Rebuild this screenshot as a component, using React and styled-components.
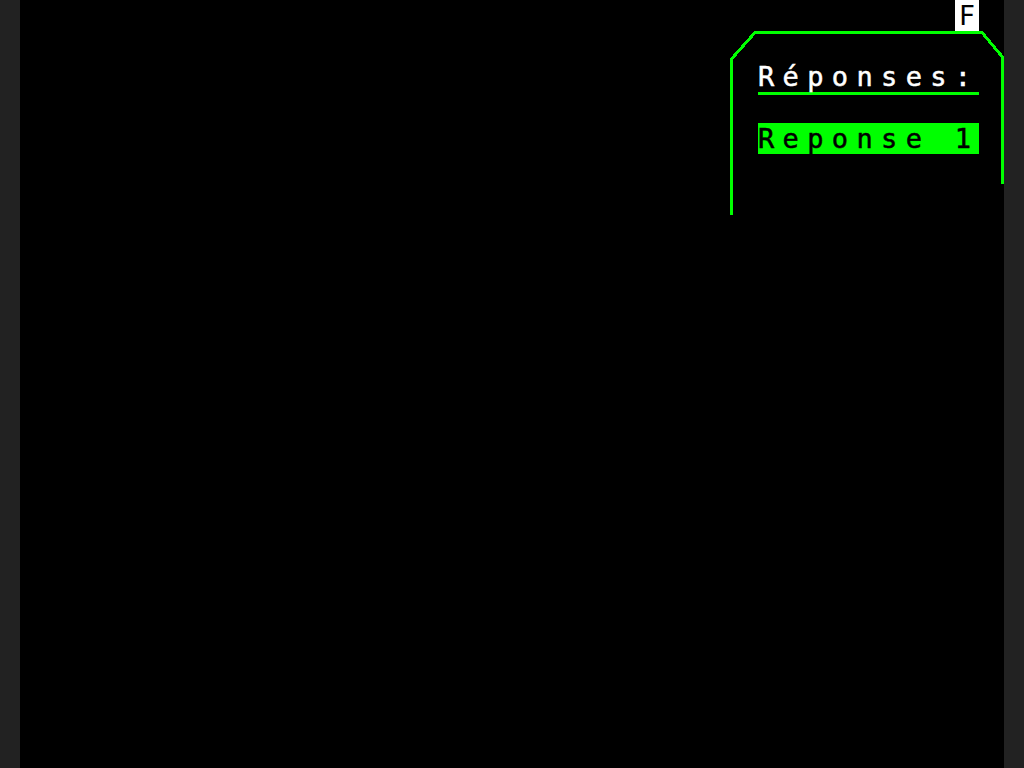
import React from 'react';
import styled, { createGlobalStyle } from 'styled-components';

const GREEN = '#00ff00';

const GlobalStyle = createGlobalStyle`
  html, body {
    margin: 0;
    padding: 0;
    background: #222222;
  }
  body {
    font-family: "DejaVu Sans Mono", "Liberation Mono", monospace;
  }
`;

const Screen = styled.div`
  width: 984px;
  height: 768px;
  margin: 0 auto;
  background: #000;
  display: flex;
  flex-direction: column;
  overflow: hidden;
`;

const StatusRow = styled.div`
  height: 31px;
  display: flex;
  justify-content: flex-end;
  padding-right: 25px;
`;

const StatusFlag = styled.div`
  width: 24px;
  height: 31px;
  background: #fff;
  color: #000;
  font-size: 27px;
  line-height: 31px;
  text-align: center;
`;

const PanelRow = styled.div`
  display: flex;
  justify-content: flex-end;
`;

const Panel = styled.div`
  position: relative;
  width: 274px;
  height: 184px;
  box-sizing: border-box;
  padding: 30px 0 0 28px;
  display: flex;
  flex-direction: column;
`;

const Frame = styled.svg`
  position: absolute;
  inset: 0;
  pointer-events: none;
`;

const Title = styled.div`
  width: 221px;
  height: 31px;
  color: #fff;
  font-size: 27px;
  line-height: 31px;
  letter-spacing: 8.35px;
  white-space: nowrap;
  border-bottom: 3px solid ${GREEN};
  box-sizing: content-box;
  -webkit-text-stroke: 0.5px #fff;
`;

const Choice = styled.div`
  width: 221px;
  height: 31px;
  margin-top: 28px;
  background: ${(p) => (p.$active ? GREEN : 'transparent')};
  color: ${(p) => (p.$active ? '#000' : GREEN)};
  font-size: 27px;
  line-height: 31px;
  letter-spacing: 8.35px;
  white-space: pre;
  -webkit-text-stroke: 0.5px ${(p) => (p.$active ? '#000' : GREEN)};
`;

export default function App() {
  return (
    <>
      <GlobalStyle />
      <Screen>
        <StatusRow>
          <StatusFlag>F</StatusFlag>
        </StatusRow>
        <PanelRow>
          <Panel>
            <Frame width="274" height="184" shapeRendering="crispEdges">
              <path
                d="M1.5 184 L1.5 28 L25 1.5 L252 1.5 L272.5 26 L272.5 153"
                fill="none"
                stroke={GREEN}
                strokeWidth="3"
              />
            </Frame>
            <Title>Réponses:</Title>
            <Choice $active>Reponse 1</Choice>
          </Panel>
        </PanelRow>
      </Screen>
    </>
  );
}
